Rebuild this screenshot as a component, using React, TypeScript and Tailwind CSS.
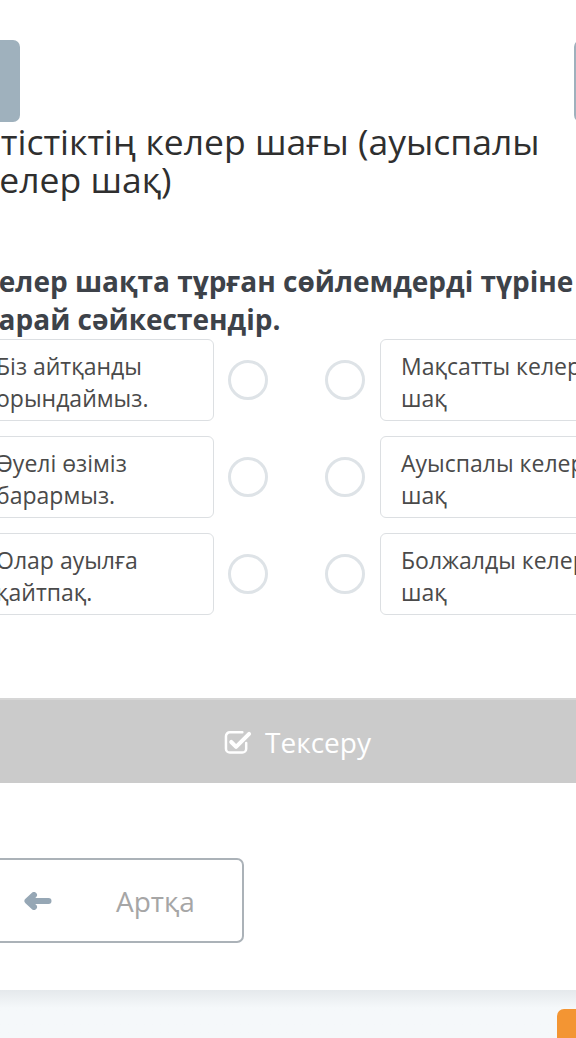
import React from "react"

const left = ["Біз айтқанды орындаймыз.", "Әуелі өзіміз барармыз.", "Олар ауылға қайтпақ."]
const right = ["Мақсатты келер шақ", "Ауыспалы келер шақ", "Болжалды келер шақ"]

function CheckSquare() {
  return (
    <svg width="28" height="26" viewBox="0 0 29 27" fill="none">
      <path d="M19 3.5H6a4 4 0 0 0-4 4v13a4 4 0 0 0 4 4h13a4 4 0 0 0 4-4v-6" stroke="white" strokeWidth="2.6" strokeLinecap="round" />
      <path d="M7.5 13.5l5 5L26 5" stroke="white" strokeWidth="4.2" strokeLinecap="round" strokeLinejoin="round" />
    </svg>
  )
}

function ArrowLeft() {
  return (
    <svg width="29" height="18" viewBox="0 0 29 18" fill="none">
      <path d="M5 9h20.5M11 3L4.5 9l6.5 6" stroke="#96a7b5" strokeWidth="6" strokeLinecap="round" strokeLinejoin="round" />
    </svg>
  )
}

function Circle() {
  return <div className="w-[40px] h-[40px] shrink-0 rounded-full border-[3px] border-[#dee3e7]" />
}

export default function App() {
  return (
    <div className="w-[576px] h-[1038px] overflow-hidden bg-white font-['Open_Sans',sans-serif]">
      <div className="-ml-[40px] w-[675px]">
        <div className="pt-[40px] flex justify-between">
          <div className="w-[60px] h-[82px] rounded-[7px] bg-[#9fb1bd]" />
          <div className="w-[61px] h-[82px] rounded-[7px] bg-[#9fb1bd]" />
        </div>

        <h1 className="ml-[21px] text-[35.5px] leading-[38px] text-[#2f2f2f] w-[590px]">
          Етістіктің келер шағы (ауыспалы келер шақ)
        </h1>

        <h2 className="ml-[20px] mt-[64px] text-[28px] leading-[38px] font-bold text-[#3d4249] w-[660px]">
          Келер шақта тұрған сөйлемдерді түріне қарай сәйкестендір.
        </h2>

        <div className="mt-[1px] ml-[15px] w-[644px] flex flex-col gap-[15px]">
          {left.map((l, i) => (
            <div key={i} className="flex items-center">
              <div className="w-[239px] h-[82px] border border-[#dcdfe2] rounded-[6px] px-[20px] pt-[3px] flex items-center text-[23px] leading-[32px] text-[#4a4a4a]">
                {l}
              </div>
              <div className="ml-[14px]"><Circle /></div>
              <div className="ml-[57px]"><Circle /></div>
              <div className="ml-[15px] w-[239px] h-[82px] border border-[#dcdfe2] rounded-[6px] px-[20px] pt-[3px] flex items-center text-[23px] leading-[32px] text-[#4a4a4a]">
                {right[i]}
              </div>
            </div>
          ))}
        </div>

        <div className="mt-[83px] h-[85px] bg-[#cbcbcb] border-t-2 border-[#d6d6d6] flex items-center justify-center gap-[13px] text-white text-[28px]">
          <CheckSquare />
          <span>Тексеру</span>
        </div>

        <div className="mt-[75px] ml-[15px] w-[269px] h-[85px] border-2 border-[#abb2b8] rounded-[7px] flex items-center pl-[46px]">
          <ArrowLeft />
          <span className="ml-[64px] text-[28px] text-[#a6a6a6]">Артқа</span>
        </div>

        <div className="mt-[47px] h-[60px] bg-gradient-to-b from-[#e5e9ec] to-[#f5f8fa] to-[30%] pl-[597px] pt-[19px]">
          <div className="w-[80px] h-[50px] rounded-[7px] bg-[#f39533]" />
        </div>
      </div>
    </div>
  )
}
